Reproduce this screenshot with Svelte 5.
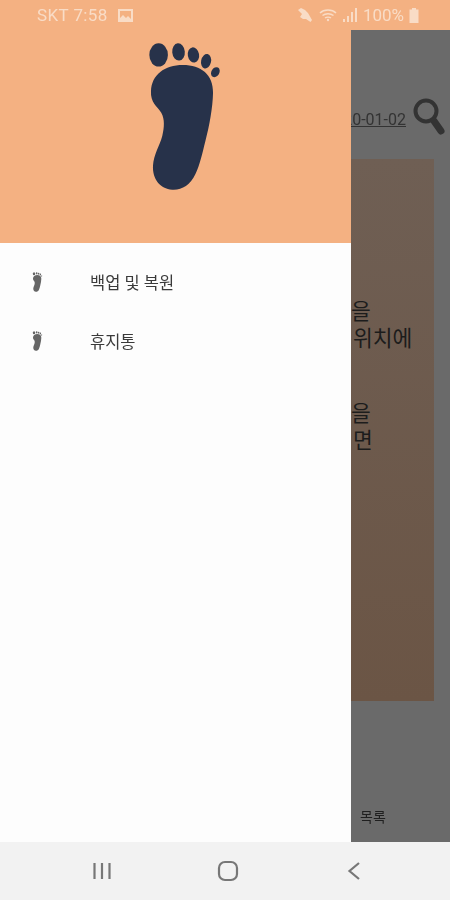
<script>
  const menu = ['백업 및 복원', '휴지통'];
</script>

<svg class="defs" width="0" height="0" aria-hidden="true">
  <symbol id="foot" viewBox="55 38 220 450">
    <ellipse cx="87" cy="76" rx="28" ry="35" />
    <ellipse cx="147" cy="67" rx="19" ry="26" transform="rotate(-5 147 67)" />
    <ellipse cx="192" cy="76" rx="17" ry="23" transform="rotate(-10 192 76)" />
    <ellipse cx="230" cy="95" rx="15" ry="22" transform="rotate(12 230 95)" />
    <ellipse cx="258" cy="128" rx="12" ry="16" transform="rotate(30 258 128)" />
    <path d="M160 106 C215 106 252 135 251 190 C250 235 240 290 228 335 C218 375 212 405 198 435 C182 470 155 484 128 482 C92 480 68 450 70 410 C72 375 90 350 98 320 C104 295 106 270 95 250 C82 230 62 220 64 185 C66 135 105 106 160 106 Z" />
  </symbol>
</svg>

<div class="phone">
  <div class="status">
    <div class="status-left">
      <span>SKT 7:58</span>
      <svg width="15" height="13" viewBox="0 0 15 13">
        <path fill-rule="evenodd" d="M0 0H15V13H0Z M2 2V9L5 6 8 9 10 7 13 10V2Z" />
      </svg>
    </div>
    <div class="status-right">
      <svg width="16" height="16" viewBox="0 0 16 16">
        <path d="M1 3 4 1 8 3 11 6 15 13 13.500 15 9 12H6L3 10 5 7Z" />
      </svg>
      <svg width="18" height="14" viewBox="0 0 18 14" class="wifi">
        <path d="M1 5C5 1 13 1 17 5M3.500 7.500C6.500 5 11.500 5 14.500 7.500M6 10C7.500 9 10.500 9 12 10" />
        <circle cx="9" cy="12" r="1.200" />
      </svg>
      <svg width="14" height="14" viewBox="0 0 14 14">
        <path d="M0 11H2V14H0ZM4 8H6V14H4ZM8 4H10V14H8ZM12 0H14V14H12Z" />
      </svg>
      <span class="pct">100%</span>
      <svg width="10" height="15" viewBox="0 0 10 15">
        <path d="M3 0H7V1.500H9.500V15H0.500V1.500H3Z" />
      </svg>
    </div>
  </div>

  <div class="screen">
    <aside class="drawer">
      <div class="drawer-head">
        <svg class="big-foot"><use href="#foot" /></svg>
      </div>
      <ul class="menu">
        {#each menu as item}
          <li>
            <svg class="small-foot"><use href="#foot" /></svg>
            <span>{item}</span>
          </li>
        {/each}
      </ul>
    </aside>

    <main class="behind">
      <div class="top-row">
        <span class="date">2020-01-02</span>
        <svg class="search" width="32" height="38" viewBox="0 0 32 38">
          <circle cx="13" cy="14" r="10.500" />
          <path class="handle" d="M21 24 28 34" />
        </svg>
      </div>
      <div class="photo">
        <p><span>을</span><span class="inset">위치에</span></p>
        <p><span>을</span><span class="inset">면</span></p>
      </div>
      <div class="bottom-row">목록</div>
    </main>
  </div>

  <nav class="navbar">
    <svg width="20" height="20" viewBox="0 0 20 20">
      <path d="M2.500 2V18M10 2V18M17.500 2V18" />
    </svg>
    <svg width="22" height="22" viewBox="0 0 22 22">
      <rect x="2" y="2" width="18" height="18" rx="6" />
    </svg>
    <svg width="14" height="20" viewBox="0 0 14 20">
      <path d="M12 2 2.500 10 12 18" />
    </svg>
  </nav>
</div>

<style>
  :global(body) {
    margin: 0;
    font-family: Roboto, "Noto Sans CJK KR", sans-serif;
  }

  .defs {
    position: absolute;
  }

  .phone {
    width: 450px;
    height: 900px;
    display: flex;
    flex-direction: column;
    overflow: hidden;
    background: #f2f2f2;
  }

  .status {
    height: 30px;
    flex: none;
    background: #f4b182;
    display: flex;
    align-items: center;
    justify-content: space-between;
    padding: 0 31px 0 37px;
    color: #f9dcc6;
    fill: #f9dcc6;
    font-size: 17px;
    filter: blur(0.6px);
  }

  .status-left,
  .status-right {
    display: flex;
    align-items: center;
  }

  .status-left {
    gap: 10px;
    letter-spacing: 0.4px;
  }

  .status-right {
    gap: 6px;
  }

  .wifi {
    stroke: #f9dcc6;
    stroke-width: 1.500;
    fill: none;
  }

  .wifi circle {
    fill: #f9dcc6;
    stroke: none;
  }

  .pct {
    margin: 0 -1px 0 0;
  }

  .screen {
    flex: 1;
    display: flex;
    min-height: 0;
  }

  .drawer {
    width: 351px;
    flex: none;
    display: flex;
    flex-direction: column;
    background: #fdfdfd;
  }

  .drawer-head {
    height: 213px;
    flex: none;
    background: #f4b182;
    padding: 12px 0 0 148px;
    box-sizing: border-box;
  }

  .big-foot {
    display: block;
    width: 73px;
    height: 150px;
    fill: #27324a;
  }

  .menu {
    list-style: none;
    margin: 0;
    padding: 9px 0 0;
  }

  .menu li {
    height: 59px;
    display: flex;
    align-items: center;
    padding-left: 30px;
    font-size: 16.500px;
    color: #3a3a3a;
    filter: blur(0.6px);
  }

  .small-foot {
    width: 15px;
    height: 20px;
    margin-right: 45px;
    fill: #666;
  }

  .behind {
    flex: 1;
    min-width: 0;
    display: flex;
    flex-direction: column;
    background: #6a6a6a;
    overflow: hidden;
  }

  .top-row {
    height: 129px;
    flex: none;
    display: flex;
    justify-content: flex-end;
    align-items: flex-start;
    padding: 67px 5px 0 0;
    box-sizing: border-box;
    filter: blur(0.5px);
  }

  .date {
    flex: none;
    font-size: 16px;
    line-height: 20px;
    margin: 13px 7px 0 0;
    color: #333;
    text-decoration: underline;
  }

  .search {
    flex: none;
    fill: none;
    stroke: #333;
    stroke-width: 4;
  }

  .handle {
    stroke-width: 7;
    stroke-linecap: round;
  }

  .photo {
    height: 542px;
    flex: none;
    margin-right: 16px;
    padding-top: 140px;
    box-sizing: border-box;
    background: linear-gradient(#6f5f54, #6b5545);
    font-size: 21.500px;
    line-height: 26.500px;
    color: #1c1c1c;
  }

  .photo p {
    margin: 0 0 49px;
    display: flex;
    flex-direction: column;
  }

  .inset {
    padding-left: 2px;
  }

  .bottom-row {
    flex: 1;
    display: flex;
    align-items: flex-end;
    padding: 0 0 16px 9px;
    font-size: 14px;
    color: #1f1f1f;
    filter: blur(0.5px);
  }

  .navbar {
    height: 58px;
    flex: none;
    display: grid;
    grid-template-columns: repeat(3, 126px);
    justify-content: center;
    justify-items: center;
    align-items: center;
    padding-left: 6px;
    box-sizing: border-box;
    background: #f2f2f2;
  }

  .navbar svg {
    fill: none;
    stroke: #777;
    stroke-width: 2.200;
  }
</style>
